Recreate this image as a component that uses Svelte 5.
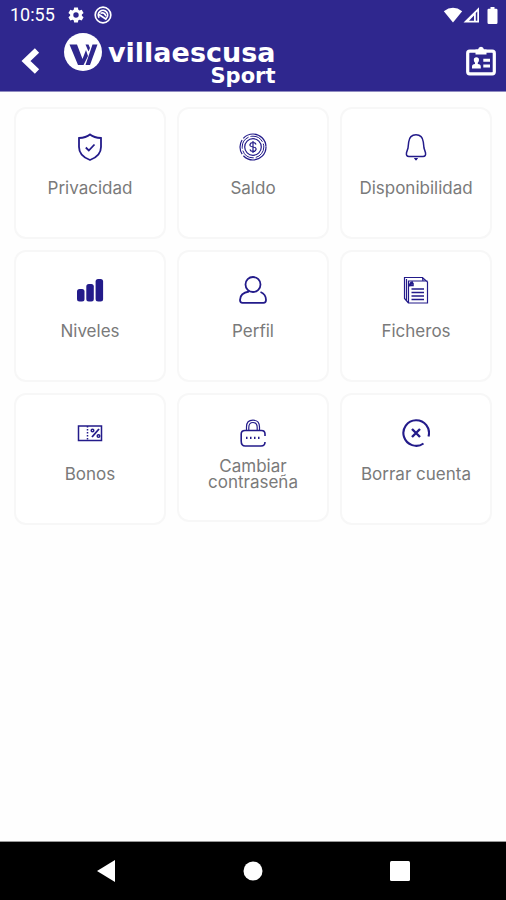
<script lang="ts">
    type Item = { icon: string; label: string; wrap?: boolean };

    const items: Item[] = [
        { icon: "shield", label: "Privacidad" },
        { icon: "coin", label: "Saldo" },
        { icon: "bell", label: "Disponibilidad" },
        { icon: "levels", label: "Niveles" },
        { icon: "user", label: "Perfil" },
        { icon: "files", label: "Ficheros" },
        { icon: "voucher", label: "Bonos" },
        { icon: "lock", label: "Cambiar contraseña", wrap: true },
        { icon: "remove", label: "Borrar cuenta" },
    ];
</script>

<div class="screen">
    <header>
        <div class="status">
            <span class="time">10:55</span>
            <svg width="18" height="18" viewBox="0 0 24 24">
                <path
                    fill="#fff"
                    fill-rule="evenodd"
                    d="M9.500 2h5l.600 3 1.600.900 2.900-1 2.500 4.300-2.300 2v1.700l2.300 2-2.500 4.300-2.900-1-1.600.900-.600 3h-5l-.600-3-1.600-.900-2.900 1L1.900 14.900l2.300-2v-1.700l-2.300-2 2.500-4.300 2.900 1 1.600-.900zM12 8.400a3.600 3.600 0 1 0 0 7.200 3.600 3.600 0 0 0 0-7.200z"
                />
            </svg>
            <svg class="ring" width="18" height="18" viewBox="0 0 18 18" fill="none" stroke="#fff">
                <circle cx="9" cy="9" r="7.800" stroke-width="1.700" />
                <path d="M5.200 11.800a4.700 4.700 0 1 1 7 .600M5 8.500l7.500 5M6.500 7.200q4-1.500 5.500 3" stroke-width="1.700" />
            </svg>
            <div class="signals">
                <svg width="20" height="16" viewBox="0 0 20 16">
                    <path fill="#fff" d="M10 15.500.8 4.300Q10-2.600 19.200 4.300z" />
                </svg>
                <svg width="17" height="16" viewBox="0 0 17 16">
                    <path fill="#fff" fill-rule="evenodd" d="M.5 15.500 16 .300v15.200zM6 13.700h5V8.600zM12.800 6v7.700h1.500V4.500z" />
                </svg>
                <svg class="battery" width="11" height="17" viewBox="0 0 11 17">
                    <path fill="#fff" d="M3.500 0h4v1.700H9.200Q10.500 1.700 10.500 3V15.500Q10.500 17 9.200 17H1.800Q.5 17 .5 15.500V3Q.5 1.700 1.800 1.700H3.500z" />
                </svg>
            </div>
        </div>

        <div class="bar">
            <button class="back" aria-label="Volver">
                <svg width="20" height="28" viewBox="0 0 20 28">
                    <path d="M17 3.500 6 14l11 10.500" fill="none" stroke="#fff" stroke-width="6.200" />
                </svg>
            </button>
            <div class="logo">
                <svg width="38" height="38" viewBox="0 0 38 38">
                    <circle cx="19" cy="19" r="19" fill="#fff" />
                    <path
                        fill="#2f278e"
                        d="M5.500 11.500H13L18.500 26l3.500-9 2 6L19.500 32h-5.500zM28.500 11.500h5L26 32h-4.500zM21.500 11.500h3L26 15l-1.500 3.500z"
                    />
                </svg>
                <div class="name">
                    <span class="brand">villaescusa</span>
                    <span class="sub">Sport</span>
                </div>
            </div>
            <button class="card-id" aria-label="Carnet">
                <svg width="30" height="30" viewBox="0 0 30 30">
                    <rect x="1.700" y="5.200" width="26.600" height="22.600" rx="2" fill="none" stroke="#fff" stroke-width="3.200" />
                    <path
                        fill="#fff"
                        d="M9.500 8.500V3.500H12Q12.500.8 15 .8T18 3.500H20.500V8.500zM6 22.500v-1.800q0-2.200 3-2.600v-1.300q-1.200-1-1.200-2.800 0-2.700 2.600-2.700T13 14q0 1.800-1.200 2.800v1.300q3 .400 3 2.600v1.800zM17.300 12.800h6.700v3h-6.700zM17.300 18.500h6.700v3h-6.700z"
                    />
                </svg>
            </button>
        </div>
    </header>

    <main>
        {#each items as item}
            <button class="tile">
                <svg class="icon" width="28" height="28" viewBox="0 0 28 28">
                    {#if item.icon === "shield"}
                        <path d="M14 1.500Q18 4.800 25 5v9q0 9-11 13Q3 23 3 14V5q7-.200 11-3.500z" />
                        <path d="m9.800 14.500 3 3 5.700-6" />
                    {:else if item.icon === "coin"}
                        <g stroke-width="1.200">
                            <circle cx="14" cy="14" r="13" stroke-dasharray="31 2 15 2" />
                            <circle cx="14" cy="14" r="10.800" stroke-width="1" stroke-dasharray="14 2" />
                            <circle cx="14" cy="14" r="8.300" />
                            <path d="M17 11.500q-.500-2-3-2t-3 2 3 2.500 3 2.500-3 2-3-2M14 8v12" />
                        </g>
                    {:else if item.icon === "bell"}
                        <path
                            d="M14 1.800c-4.200 0-6.800 3-7.300 7.200L6 15l-1.500 4.800q-.700 3.500 2.500 3.700h14q3.200-.200 2.500-3.700L22 15l-.700-6C20.800 4.800 18.200 1.800 14 1.800z"
                            stroke-width="1.500"
                        />
                        <path d="M12.500 25.500h3l-1.500 1.700z" fill="#231b8a" stroke-width="1" />
                    {:else if item.icon === "levels"}
                        <g fill="#231b8a" stroke="none">
                            <rect x="1" y="13" width="7.500" height="12.500" rx="2.500" />
                            <rect x="10.300" y="8" width="7.500" height="17.500" rx="2.500" />
                            <rect x="19.600" y="3" width="7.500" height="22.500" rx="2.500" />
                        </g>
                    {:else if item.icon === "user"}
                        <circle cx="14" cy="8.500" r="7.500" />
                        <path d="M10 15.500C4 16.500 1 20 1 24q0 2.800 2.500 2.800h21Q27 26.800 27 24c0-4-2-6.500-5.500-8" />
                    {:else if item.icon === "files"}
                        <g stroke-width="1.200">
                            <path d="M6.500 27 2.500 22.500V1.500h18L25.500 6v21h-19V5h14.500M4.500 24.500V3M20.500 1.500 21 5h4.500" />
                            <path d="M9.500 13h12.500M9.500 16.500h12.500M9.500 20h12.500M9.500 23.500h12.500" stroke-width="1.500" />
                            <path d="M7.500 10.500Q7.500 6 11 6M9 9.500v-2h2v2z" stroke-width="1.500" />
                        </g>
                    {:else if item.icon === "voucher"}
                        <path d="M2.500 7h23v14.500h-23z" stroke-width="1.500" />
                        <path d="M11.500 7v14.500" stroke-width="1.500" stroke-dasharray="1.500 1.500" />
                        <path d="m16 18 7-8" />
                        <circle cx="16.500" cy="11.500" r="1.300" stroke-width="1.500" />
                        <circle cx="22.500" cy="17" r="1.300" stroke-width="1.500" />
                    {:else if item.icon === "lock"}
                        <path d="M26 17v-2q0-3.500-3.500-3.500H6q-3.800 0-3.800 3.500V22q0 5 4 5h15.800q4 0 4-4" stroke-width="1.600" />
                        <path d="M7.500 11.500V8q0-6.800 6.500-6.800T20.500 8v3.500M9.800 11.500V8.500q0-5 4.200-5t4.200 5v3" stroke-width="1.200" />
                        <path d="M7 18.800h1.500M11 18.800h1.500M15 18.800h1.500M19 18.800h1.500" stroke-width="2.200" />
                    {:else}
                        <path d="M21.500 24.500A12.800 12.800 0 1 1 26.500 17.500" stroke-width="2.100" />
                        <path d="m10 10 8 8m0-8-8 8" stroke-width="2.400" />
                    {/if}
                </svg>
                <span class="label" class:wrap={item.wrap}>{item.label}</span>
            </button>
        {/each}
    </main>

    <nav>
        <button aria-label="Atrás">
            <svg width="20" height="22" viewBox="0 0 20 22"><path fill="#fff" d="M19 0v22L1 11z" /></svg>
        </button>
        <button aria-label="Inicio">
            <svg width="20" height="20" viewBox="0 0 20 20"><circle cx="10" cy="10" r="9.500" fill="#fff" /></svg>
        </button>
        <button aria-label="Recientes">
            <svg width="20" height="20" viewBox="0 0 20 20"><rect width="20" height="20" rx="1.500" fill="#fff" /></svg>
        </button>
    </nav>
</div>

<style>
    .screen {
        display: flex;
        flex-direction: column;
        min-height: 100vh;
        background: #fefefe;
        font-family: Inter, "Open Sans", sans-serif;
    }

    button {
        display: flex;
        align-items: center;
        justify-content: center;
        padding: 0;
        border: 0;
        background: none;
        font: inherit;
        cursor: pointer;
    }

    svg {
        display: block;
        flex: none;
    }

    header {
        background: #2f278e;
        color: #fff;
        border-bottom: 1px solid #8f8bc0;
    }

    .status {
        display: flex;
        align-items: center;
        height: 30px;
        padding: 0 8px 0 10px;
    }

    .time {
        margin-right: 12px;
        font: 18px/32px Roboto, sans-serif;
    }

    .ring {
        margin-left: 9px;
    }

    .signals {
        display: flex;
        align-items: center;
        margin-left: auto;
    }

    .battery {
        margin-left: 7px;
    }

    .bar {
        display: flex;
        align-items: center;
        height: 61px;
        padding: 0 10px 0 20px;
    }

    .logo {
        display: flex;
        align-items: flex-start;
        align-self: flex-start;
        margin: 3px auto 0 24px;
    }

    .name {
        display: flex;
        flex-direction: column;
        align-items: flex-end;
        margin: 7px 0 0 6px;
        font-family: "DejaVu Sans", sans-serif;
        font-weight: 700;
    }

    .brand {
        font-size: 27px;
        line-height: 26px;
    }

    .sub {
        font-size: 21px;
        line-height: 20px;
    }

    main {
        display: grid;
        grid-template-columns: repeat(3, 1fr);
        align-items: start;
        align-content: start;
        gap: 11px;
        flex: 1;
        padding: 15px 14px;
    }

    .tile {
        flex-direction: column;
        box-sizing: border-box;
        padding: 24px 16px 30px;
        border: 2px solid #f7f7f7;
        border-radius: 12px;
        background: #fff;
    }

    .icon {
        margin-bottom: 11px;
        fill: none;
        stroke: #231b8a;
        stroke-width: 1.8;
    }

    /* single-line labels sit lower than the two-line one */
    .label {
        padding: 8px 0 11px;
        color: #7a7a7a;
        font-size: 17px;
        line-height: 16px;
        white-space: nowrap;
    }

    .label.wrap {
        padding: 0;
        white-space: normal;
    }

    nav {
        display: grid;
        grid-template-columns: repeat(3, 1fr);
        height: 58px;
        padding: 0 32px;
        border-top: 1px solid #999;
        background: #000;
    }
</style>
